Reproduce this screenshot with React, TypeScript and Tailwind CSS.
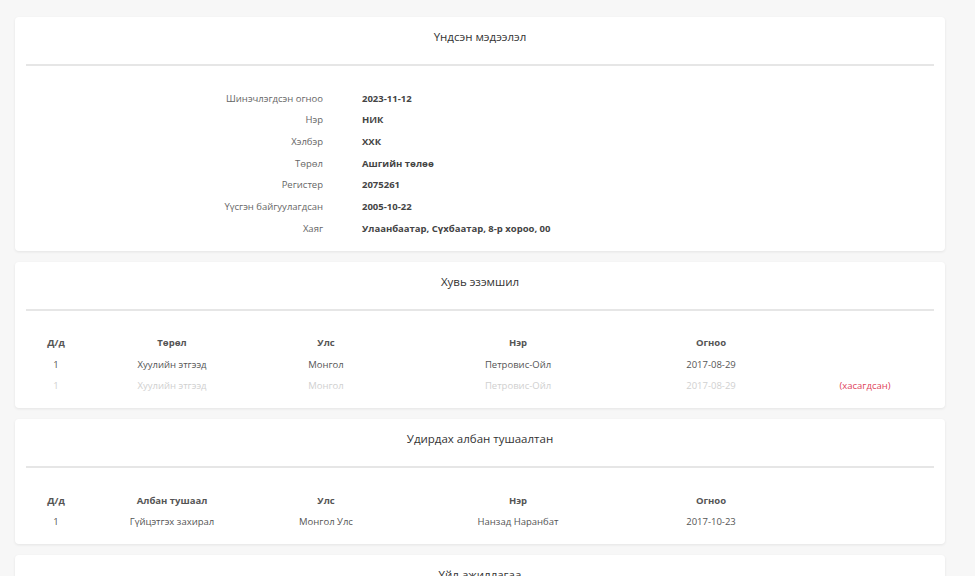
import React from 'react'

const info = [
  { label: 'Шинэчлэгдсэн огноо', value: '2023-11-12' },
  { label: 'Нэр', value: 'НИК' },
  { label: 'Хэлбэр', value: 'ХХК' },
  { label: 'Төрөл', value: 'Ашгийн төлөө' },
  { label: 'Регистер', value: '2075261' },
  { label: 'Үүсгэн байгуулагдсан', value: '2005-10-22' },
  { label: 'Хаяг', value: 'Улаанбаатар, Сүхбаатар, 8-р хороо, 00' },
]

const owners = [
  { type: 'Хуулийн этгээд', country: 'Монгол', name: 'Петровис-Ойл', date: '2017-08-29', removed: false },
  { type: 'Хуулийн этгээд', country: 'Монгол', name: 'Петровис-Ойл', date: '2017-08-29', removed: true },
]

const officers = [
  { position: 'Гүйцэтгэх захирал', country: 'Монгол Улс', name: 'Нанзад Наранбат', date: '2017-10-23' },
]

const gridCols = 'grid grid-cols-[60px_172px_136px_248px_138px_1fr]'

const Card = ({ title, children }: { title: string; children?: React.ReactNode }) => (
  <div className="bg-white rounded-[4px] shadow-[0_1px_3px_rgba(0,0,0,0.08)] px-[11px]">
    <div className="h-[39px] flex items-center justify-center text-[11.5px] text-[#333]">
      {title}
    </div>
    <div className="mt-[8px] h-[2px] bg-[#e6e6e6]" />
    {children}
  </div>
)

export default function App() {
  return (
    <div
      className="min-h-screen bg-[#f7f7f7] pl-[15px] pr-[30px] pt-[17px] flex flex-col gap-[11px]"
      style={{ fontFamily: '"Open Sans", "Noto Sans", sans-serif' }}>
      <Card title="Үндсэн мэдээлэл">
        <div className="pt-[22px] pb-[11px]">
          {info.map(row => (
            <div key={row.label} className="h-[21.7px] flex items-center text-[9.5px]">
              <div className="w-[297px] text-right text-[#666]">{row.label}</div>
              <div className="ml-[39px] font-bold text-[#444]">{row.value}</div>
            </div>
          ))}
        </div>
      </Card>

      <Card title="Хувь эзэмшил">
        <div className="pt-[22px] pb-[11px] text-[9.5px]">
          <div className={`${gridCols} h-[21.5px] items-center text-center font-bold text-[#555]`}>
            <div>Д/д</div>
            <div>Төрөл</div>
            <div>Улс</div>
            <div>Нэр</div>
            <div>Огноо</div>
            <div />
          </div>
          {owners.map((o, i) => (
            <div
              key={i}
              className={`${gridCols} h-[21.5px] items-center text-center ${
                o.removed ? 'text-[#d0d0d0]' : 'text-[#555]'
              }`}>
              <div>1</div>
              <div>{o.type}</div>
              <div>{o.country}</div>
              <div>{o.name}</div>
              <div>{o.date}</div>
              <div className="pl-[16px] text-[#e0435a]">{o.removed ? '(хасагдсан)' : ''}</div>
            </div>
          ))}
        </div>
      </Card>

      <Card title="Удирдах албан тушаалтан">
        <div className="pt-[22px] pb-[11px] text-[9.5px]">
          <div className={`${gridCols} h-[21.5px] items-center text-center font-bold text-[#555]`}>
            <div>Д/д</div>
            <div>Албан тушаал</div>
            <div>Улс</div>
            <div>Нэр</div>
            <div>Огноо</div>
            <div />
          </div>
          {officers.map((o, i) => (
            <div key={i} className={`${gridCols} h-[21.5px] items-center text-center text-[#555]`}>
              <div>{i + 1}</div>
              <div>{o.position}</div>
              <div>{o.country}</div>
              <div>{o.name}</div>
              <div>{o.date}</div>
              <div />
            </div>
          ))}
        </div>
      </Card>

      <Card title="Үйл ажиллагаа">
        <div className="h-[60px]" />
      </Card>
    </div>
  )
}
